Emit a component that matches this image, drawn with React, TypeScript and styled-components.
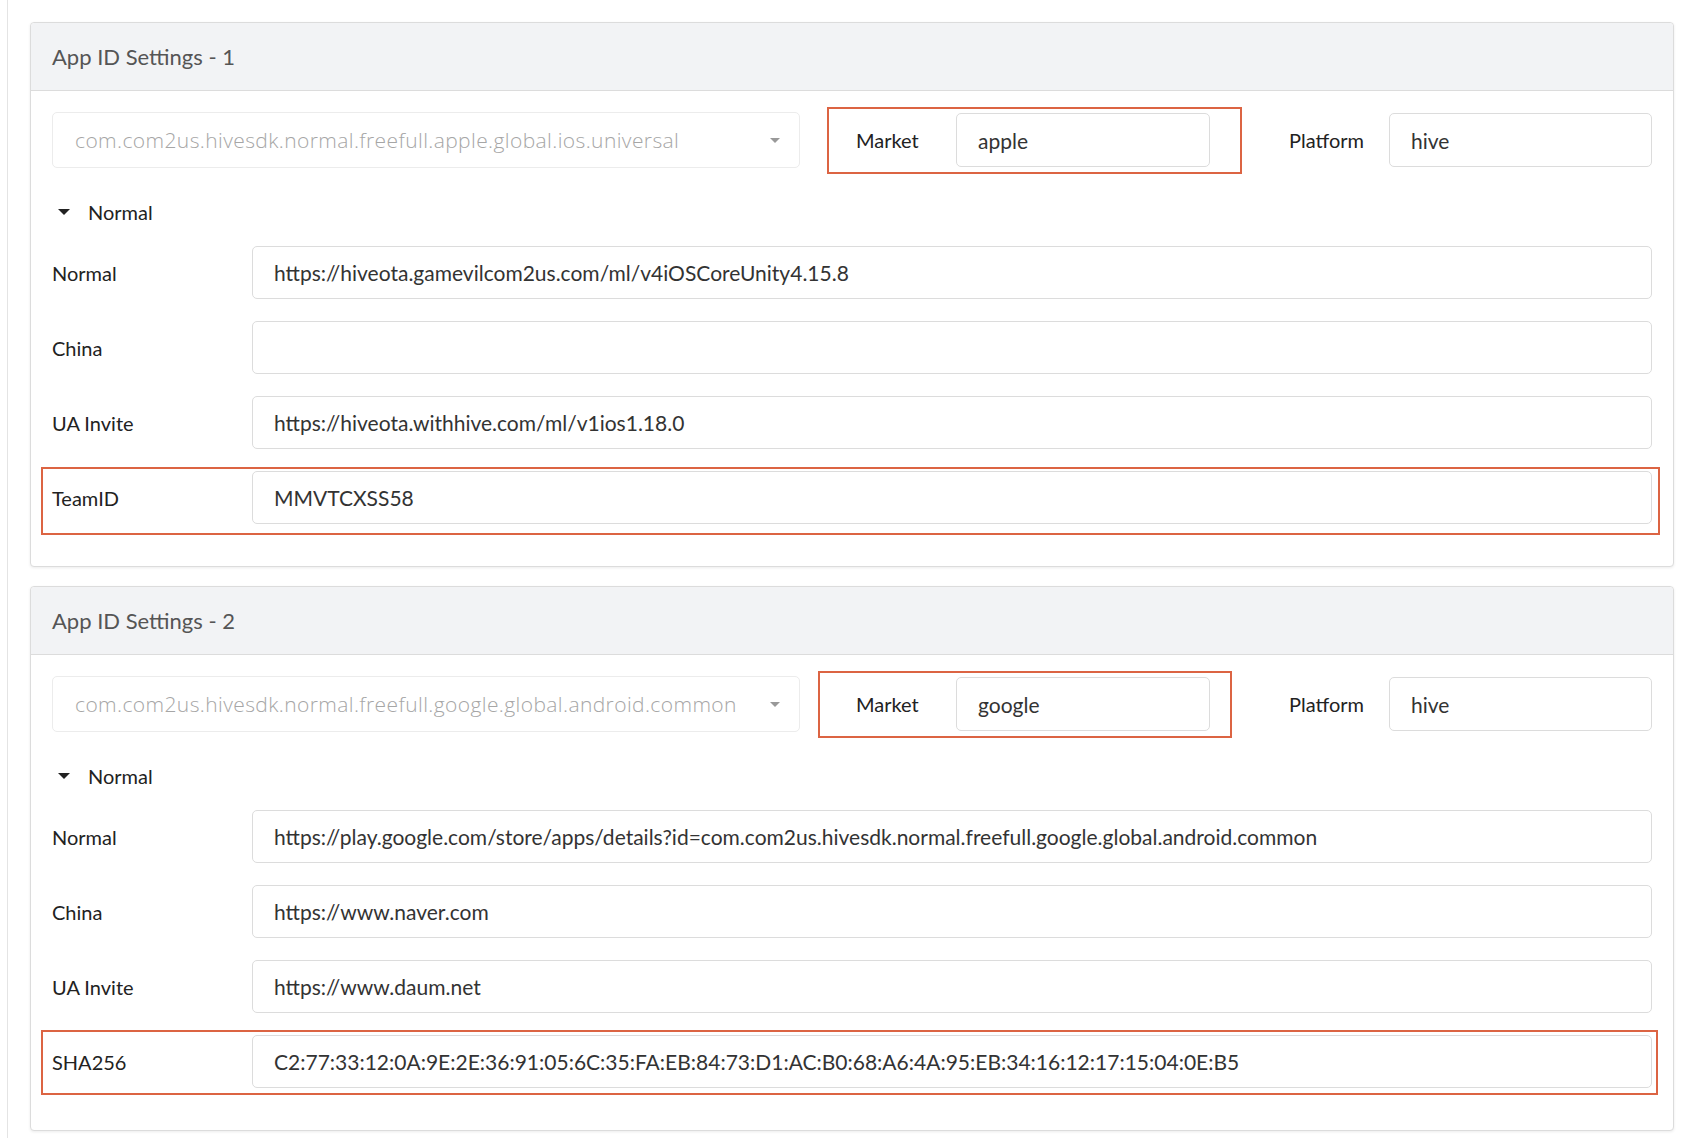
import { FC } from "react";
import styled, { createGlobalStyle } from "styled-components";

interface Field {
  label: string;
  value: string;
  highlight?: boolean;
}

interface Inset {
  top: number;
  right: number;
  bottom: number;
  left: number;
}

interface AppSetting {
  title: string;
  appId: string;
  market: string;
  platform: string;
  marketInset: Inset;
  fieldInset: Inset;
  fields: Field[];
}

const settings: AppSetting[] = [
  {
    title: "App ID Settings - 1",
    appId: "com.com2us.hivesdk.normal.freefull.apple.global.ios.universal",
    market: "apple",
    platform: "hive",
    marketInset: { top: 6, right: 32, bottom: 7, left: 29 },
    fieldInset: { top: 4, right: 8, bottom: 11, left: 11 },
    fields: [
      { label: "Normal", value: "https://hiveota.gamevilcom2us.com/ml/v4iOSCoreUnity4.15.8" },
      { label: "China", value: "" },
      { label: "UA Invite", value: "https://hiveota.withhive.com/ml/v1ios1.18.0" },
      { label: "TeamID", value: "MMVTCXSS58", highlight: true },
    ],
  },
  {
    title: "App ID Settings - 2",
    appId: "com.com2us.hivesdk.normal.freefull.google.global.android.common",
    market: "google",
    platform: "hive",
    marketInset: { top: 6, right: 22, bottom: 7, left: 38 },
    fieldInset: { top: 5, right: 6, bottom: 7, left: 11 },
    fields: [
      {
        label: "Normal",
        value:
          "https://play.google.com/store/apps/details?id=com.com2us.hivesdk.normal.freefull.google.global.android.common",
      },
      { label: "China", value: "https://www.naver.com" },
      { label: "UA Invite", value: "https://www.daum.net" },
      {
        label: "SHA256",
        value:
          "C2:77:33:12:0A:9E:2E:36:91:05:6C:35:FA:EB:84:73:D1:AC:B0:68:A6:4A:95:EB:34:16:12:17:15:04:0E:B5",
        highlight: true,
      },
    ],
  },
];

const SettingsCard: FC<{ setting: AppSetting }> = ({ setting }) => {
  return (
    <Card>
      <CardHeader>{setting.title}</CardHeader>
      <CardBody>
        <TopRow>
          <AppSelect>
            <span>{setting.appId}</span>
            <Caret />
          </AppSelect>
          <MarketGroup>
            <Highlight $inset={setting.marketInset} />
            <GroupLabel>Market</GroupLabel>
            <MarketInput readOnly value={setting.market} />
          </MarketGroup>
          <PlatformGroup>
            <GroupLabel>Platform</GroupLabel>
            <TextInput readOnly value={setting.platform} />
          </PlatformGroup>
        </TopRow>

        <Toggle>
          <Arrow />
          Normal
        </Toggle>

        <Fields>
          {setting.fields.map((field) => (
            <FieldRow key={field.label}>
              {field.highlight && <Highlight $inset={setting.fieldInset} />}
              <FieldLabel>{field.label}</FieldLabel>
              <TextInput readOnly value={field.value} />
            </FieldRow>
          ))}
        </Fields>
      </CardBody>
    </Card>
  );
};

const App: FC = () => {
  return (
    <>
      <GlobalStyle />
      <Page>
        {settings.map((s) => (
          <SettingsCard key={s.title} setting={s} />
        ))}
      </Page>
    </>
  );
};

const GlobalStyle = createGlobalStyle`
  * {
    box-sizing: border-box;
  }

  body {
    margin: 0;
    background: #fff;
    font-family: Lato, "Noto Sans", "Liberation Sans", sans-serif;
    color: #222;
  }
`;

const Page = styled.main`
  margin-left: 7px;
  min-height: 1138px;
  border-left: 1px solid #e4e4e4;
  padding: 22px 14px 0 22px;
  display: flex;
  flex-direction: column;
  gap: 19px;
`;

const Card = styled.section`
  border: 1px solid #dcdcdc;
  border-radius: 4px;
  background: #fff;
  box-shadow: 0 1px 3px rgba(0, 0, 0, 0.08);
`;

const CardHeader = styled.header`
  height: 68px;
  display: flex;
  align-items: center;
  padding: 0 21px;
  background: #f2f3f5;
  border-bottom: 1px solid #dcdcdc;
  border-radius: 4px 4px 0 0;
  font-size: 22px;
  color: #555;
`;

const CardBody = styled.div`
  padding: 21px 21px 42px 21px;
`;

const TopRow = styled.div`
  display: flex;
  align-items: center;
  height: 56px;
`;

const AppSelect = styled.div`
  flex: 0 0 748px;
  height: 56px;
  display: flex;
  align-items: center;
  justify-content: space-between;
  padding: 0 19px 0 22px;
  border: 1px solid #ececec;
  border-radius: 5px;
  font-family: "Open Sans", Lato, sans-serif;
  font-weight: 300;
  font-size: 21px;
  letter-spacing: 0.4px;
  color: #a6a6a6;
  white-space: nowrap;
  overflow: hidden;
`;

const Caret = styled.i`
  flex: none;
  width: 0;
  height: 0;
  border-left: 5.5px solid transparent;
  border-right: 5.5px solid transparent;
  border-top: 5px solid #999;
`;

const Highlight = styled.div<{ $inset: Inset }>`
  position: absolute;
  top: ${(p) => -p.$inset.top}px;
  right: ${(p) => -p.$inset.right}px;
  bottom: ${(p) => -p.$inset.bottom}px;
  left: ${(p) => -p.$inset.left}px;
  border: 2px solid #dc6443;
  pointer-events: none;
`;

const MarketGroup = styled.div`
  position: relative;
  display: flex;
  align-items: center;
  margin-left: 56px;
`;

const PlatformGroup = styled.div`
  display: flex;
  align-items: center;
  flex: 1;
  min-width: 0;
  margin-left: 79px;
`;

const GroupLabel = styled.label`
  flex: 0 0 100px;
  font-size: 20px;
  color: #222;
`;

const TextInput = styled.input`
  flex: 1;
  min-width: 0;
  height: 54px;
  padding: 0 21px;
  border: 1px solid #dcdcdc;
  border-radius: 5px;
  background: #fff;
  font-family: inherit;
  font-size: 21px;
  color: #333;
  outline: none;
`;

const MarketInput = styled(TextInput)`
  flex: 0 0 254px;
`;

const Toggle = styled.div`
  display: flex;
  align-items: center;
  gap: 18px;
  height: 26px;
  margin: 31px 0 21px;
  padding-left: 6px;
  font-size: 20px;
  color: #222;
`;

const Arrow = styled.i`
  width: 0;
  height: 0;
  border-left: 6.5px solid transparent;
  border-right: 6.5px solid transparent;
  border-top: 6px solid #222;
`;

const Fields = styled.div`
  display: flex;
  flex-direction: column;
  gap: 22px;
`;

const FieldRow = styled.div`
  position: relative;
  display: flex;
  align-items: center;
  height: 53px;

  ${TextInput} {
    height: 53px;
  }
`;

const FieldLabel = styled.label`
  flex: 0 0 200px;
  font-size: 20px;
  color: #222;
`;

export default App;
